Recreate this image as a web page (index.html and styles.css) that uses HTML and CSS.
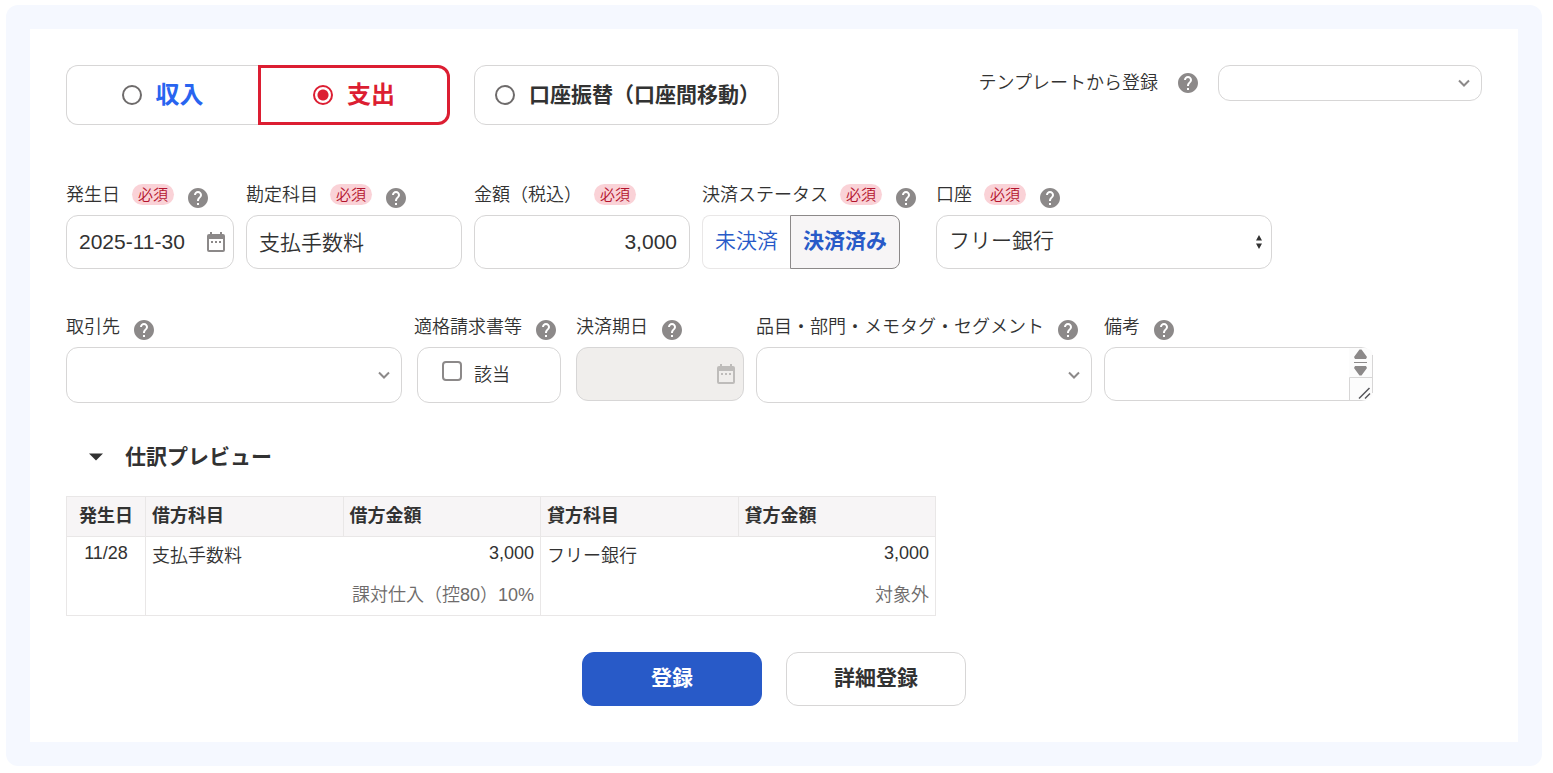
FILE: index.html
```html
<!DOCTYPE html>
<html lang="ja">
<head>
<meta charset="utf-8">
<title>取引の登録</title>
<link rel="stylesheet" href="styles.css">
</head>
<body>
<svg class="defs" aria-hidden="true">
  <symbol id="help" viewBox="0 0 24 24"><path d="M12 2C6.480 2 2 6.480 2 12s4.480 10 10 10 10-4.480 10-10S17.520 2 12 2zm1 17h-2v-2h2v2zm2.070-7.750l-.9.920C13.450 12.900 13 13.500 13 15h-2v-.5c0-1.100.450-2.100 1.170-2.830l1.240-1.260c.370-.360.590-.860.590-1.410 0-1.100-.9-2-2-2s-2 .9-2 2H8c0-2.210 1.790-4 4-4s4 1.790 4 4c0 .880-.360 1.680-.930 2.250z"/></symbol>
  <symbol id="calendar" viewBox="0 0 18 20"><path fill-rule="evenodd" d="M3 0h2v2h8V0h2v2h1a2 2 0 0 1 2 2v14a2 2 0 0 1-2 2H2a2 2 0 0 1-2-2V4a2 2 0 0 1 2-2h1zM2 7v11h14V7zM4 9h2v2H4zm4 0h2v2H8zm4 0h2v2h-2z"/></symbol>
  <symbol id="chevron" viewBox="0 0 12 8"><path d="M1 1.500l5 5 5-5" fill="none" stroke="currentColor" stroke-width="2"/></symbol>
</svg>
<div class="frame">
  <form class="panel">
    <div class="top">
      <div class="modes">
        <div class="mode-group">
          <label class="mode income"><input type="radio" name="mode">収入</label>
          <label class="mode expense"><input type="radio" name="mode" checked>支出</label>
        </div>
        <label class="mode transfer"><input type="radio" name="mode">口座振替（口座間移動）</label>
      </div>
      <div class="template">
        <label for="template">テンプレートから登録</label>
        <svg class="help"><use href="#help"/></svg>
        <div class="control template-select">
          <select id="template" class="box short"><option></option></select>
          <svg class="chevron"><use href="#chevron"/></svg>
        </div>
      </div>
    </div>

    <div class="fields">
      <div class="field w-date">
        <div class="caption"><label for="date">発生日</label><span class="badge">必須</span><svg class="help"><use href="#help"/></svg></div>
        <div class="control"><input id="date" class="box" type="text" value="2025-11-30"><svg class="calendar"><use href="#calendar"/></svg></div>
      </div>
      <div class="field w-mid">
        <div class="caption"><label for="account">勘定科目</label><span class="badge">必須</span><svg class="help"><use href="#help"/></svg></div>
        <input id="account" class="box kana" type="text" value="支払手数料">
      </div>
      <div class="field w-mid">
        <div class="caption"><label for="amount">金額（税込）</label><span class="badge">必須</span></div>
        <input id="amount" class="box amount" type="text" value="3,000">
      </div>
      <div class="field">
        <div class="caption"><span id="status">決済ステータス</span><span class="badge">必須</span><svg class="help"><use href="#help"/></svg></div>
        <div class="segments" role="group" aria-labelledby="status">
          <button type="button" class="segment">未決済</button>
          <button type="button" class="segment active">決済済み</button>
        </div>
      </div>
      <div class="field w-wide">
        <div class="caption"><label for="wallet">口座</label><span class="badge">必須</span><svg class="help"><use href="#help"/></svg></div>
        <div class="control">
          <select id="wallet" class="box kana"><option>フリー銀行</option></select>
          <svg class="updown" viewBox="0 0 6 14"><path d="M3 0l3 5.500H0zM3 14l3-5.500H0z"/></svg>
        </div>
      </div>
    </div>

    <div class="fields second">
      <div class="field w-wide">
        <div class="caption"><label for="partner">取引先</label><svg class="help"><use href="#help"/></svg></div>
        <div class="control">
          <select id="partner" class="box tall"><option></option></select>
          <svg class="chevron"><use href="#chevron"/></svg>
        </div>
      </div>
      <div class="field">
        <div class="caption"><span>適格請求書等</span><svg class="help"><use href="#help"/></svg></div>
        <label class="box tall check"><input type="checkbox">該当</label>
      </div>
      <div class="field w-date">
        <div class="caption"><label for="due">決済期日</label><svg class="help"><use href="#help"/></svg></div>
        <div class="control"><input id="due" class="box" type="text" disabled><svg class="calendar muted"><use href="#calendar"/></svg></div>
      </div>
      <div class="field w-wide">
        <div class="caption"><label for="tags">品目・部門・メモタグ・セグメント</label><svg class="help"><use href="#help"/></svg></div>
        <div class="control">
          <select id="tags" class="box tall"><option></option></select>
          <svg class="chevron"><use href="#chevron"/></svg>
        </div>
      </div>
      <div class="field w-note">
        <div class="caption"><label for="note">備考</label><svg class="help"><use href="#help"/></svg></div>
        <div class="control">
          <textarea id="note" class="box"></textarea>
          <svg class="scroller" viewBox="0 0 24 54">
            <path d="M0 1h16a8 8 0 0 1 8 8v36a8 8 0 0 1-8 8H0z" fill="#fcfcfc"/>
            <path d="M.5 53.500V30.500H23.500M23.500 8v38" fill="none" stroke="#d7d6d6"/>
            <path d="M10.500 2.500h2L18 10l-1 2H6l-1-2zM6 19h11l1 2-5.500 7.500h-2L5 21z" fill="#8c8989"/>
            <path d="M5 15.500h13" stroke="#8c8989"/>
            <path d="M10 51.500L20.500 41M16 51.500l5-5" stroke="#55555a" stroke-width="1.500"/>
          </svg>
        </div>
      </div>
    </div>

    <button type="button" class="preview-toggle"><svg viewBox="0 0 14 8"><path d="M0 .5h14L7 7.500z"/></svg>仕訳プレビュー</button>

    <table class="journal">
      <thead>
        <tr><th class="day">発生日</th><th>借方科目</th><th>借方金額</th><th>貸方科目</th><th>貸方金額</th></tr>
      </thead>
      <tbody>
        <tr>
          <td class="day">11/28</td>
          <td class="name">支払手数料</td>
          <td class="sum">3,000<div class="tax">課対仕入（控80）10%</div></td>
          <td class="name">フリー銀行</td>
          <td class="sum">3,000<div class="tax">対象外</div></td>
        </tr>
      </tbody>
    </table>

    <div class="actions">
      <button type="submit" class="action primary">登録</button>
      <button type="button" class="action">詳細登録</button>
    </div>
  </form>
</div>
</body>
</html>
```

FILE: styles.css
```css
* { box-sizing: border-box; }

body {
  margin: 0;
  padding: 5px 11px 7px 6px;
  background: #fff;
  color: #323232;
  font-family: "Liberation Sans", "Noto Sans CJK JP", sans-serif;
  font-size: 18px;
  font-weight: 350;
  line-height: 27px;
}

button, input, select, textarea { font: inherit; color: inherit; }

.defs { position: absolute; width: 0; height: 0; }

.frame { padding: 24px; border-radius: 12px; background: #f5f8ff; }
.panel { padding: 36px; background: #fff; }

.top { display: flex; justify-content: space-between; align-items: flex-start; }
.modes { display: flex; gap: 24px; }
.mode-group { display: flex; }

.mode {
  display: flex;
  align-items: center;
  justify-content: center;
  gap: 14px;
  height: 60px;
  border: 1px solid #d7d6d6;
  border-radius: 12px;
  font-size: 24px;
  font-weight: 700;
  line-height: 24px;
}
.mode input {
  appearance: none;
  width: 20px;
  height: 20px;
  margin: 0;
  border: 2px solid #6e6b6b;
  border-radius: 50%;
  background: #fff;
}
.income { width: 192px; border-right: 0; border-radius: 12px 0 0 12px; color: #2864f0; }
.expense { width: 192px; border: 3px solid #dc1e32; border-radius: 0 12px 12px 0; color: #dc1e32; }
.mode input:checked { border-color: #dc1e32; background: radial-gradient(#dc1e32 5px, #fff 6px); }
.transfer { padding: 0 18px 0 20px; font-size: 21px; }

.template { display: flex; align-items: center; gap: 18px; }
.template-select { width: 264px; }

.help { flex: none; width: 24px; height: 24px; fill: #8c8989; }

.fields { display: flex; align-items: flex-start; gap: 12px; margin-top: 56px; }
.second { margin-top: 44px; }
.w-date { width: 168px; }
.w-mid { width: 216px; }
.w-wide { width: 336px; }
.w-note { width: 269px; }

.caption { display: flex; align-items: flex-start; gap: 12px; min-height: 34px; line-height: 29px; white-space: nowrap; }
.caption .help { margin: 5px 6px 0 0; }
.badge {
  margin-top: 3px;
  padding: 0 6px;
  border-radius: 12px;
  background: #fad2d7;
  color: #b4142d;
  font-size: 15px;
  line-height: 21px;
}

.control { position: relative; }
.box {
  display: block;
  width: 100%;
  height: 54px;
  margin: 0;
  padding: 0 12px;
  border: 1px solid #d7d6d6;
  border-radius: 12px;
  background: #fff;
  font-size: 21px;
}
select.box { appearance: none; }
.box.kana { padding-bottom: 3px; }
.box.short { height: 36px; }
.box.tall { height: 56px; }
.box:disabled { background: #f0eeec; }
textarea.box { resize: none; overflow: hidden; }
.amount { text-align: right; }

.calendar { position: absolute; top: 17px; right: 9px; width: 18px; height: 20px; fill: #8c8989; }
.muted { fill: #bebcba; }
.chevron { position: absolute; top: calc(50% - 4px); right: 12px; width: 12px; height: 8px; color: #8c8989; pointer-events: none; }
.updown { position: absolute; top: 20px; right: 10px; width: 6px; height: 14px; fill: #323232; pointer-events: none; }
.scroller { position: absolute; top: 0; right: 0; width: 24px; height: 54px; }

.segments { display: flex; }
.segment {
  height: 54px;
  padding: 0 12px 3px;
  border: 1px solid #e9e7e7;
  border-right: 0;
  border-radius: 8px 0 0 8px;
  background: #fff;
  color: #285ac8;
  font-size: 21px;
}
.segment.active { border: 1px solid #8c8989; border-radius: 0 8px 8px 0; background: #f7f5f6; font-weight: 700; }

.check { display: flex; align-items: center; gap: 12px; width: 144px; margin-left: 3px; padding: 0 24px; font-size: 18px; }
.check input {
  appearance: none;
  width: 20px;
  height: 20px;
  margin: 0 0 8px;
  border: 2px solid #8c8989;
  border-radius: 4px;
}

.preview-toggle {
  display: flex;
  align-items: center;
  gap: 22px;
  margin-top: 38px;
  padding: 0 23px;
  border: 0;
  background: none;
  font-size: 21px;
  font-weight: 700;
  line-height: 32px;
}
.preview-toggle svg { width: 14px; height: 8px; fill: #323232; }

.journal { width: 870px; margin-top: 23px; border-collapse: collapse; table-layout: fixed; }
.journal th { height: 40px; padding: 0 6px; border: 1px solid #e9e7e7; background: #f7f5f6; font-weight: 700; text-align: left; }
.journal td { height: 79px; padding: 3px 6px 0; border-bottom: 1px solid #e9e7e7; vertical-align: top; }
.journal .day { width: 79px; padding-right: 0; padding-left: 0; border-left: 1px solid #e9e7e7; text-align: center; }
.journal .name { padding-top: 6px; border-left: 1px solid #e9e7e7; }
.journal .sum { border-right: 1px solid #e9e7e7; text-align: right; white-space: nowrap; }
.tax { margin-top: 15px; color: #6e6b6b; }

.actions { display: flex; justify-content: center; gap: 24px; margin-top: 36px; }
.action { width: 180px; height: 54px; padding: 0 12px 4px; border: 1px solid #d7d6d6; border-radius: 12px; background: #fff; font-size: 21px; font-weight: 700; }
.primary { border-color: #285ac8; background: #285ac8; color: #fff; }
```
